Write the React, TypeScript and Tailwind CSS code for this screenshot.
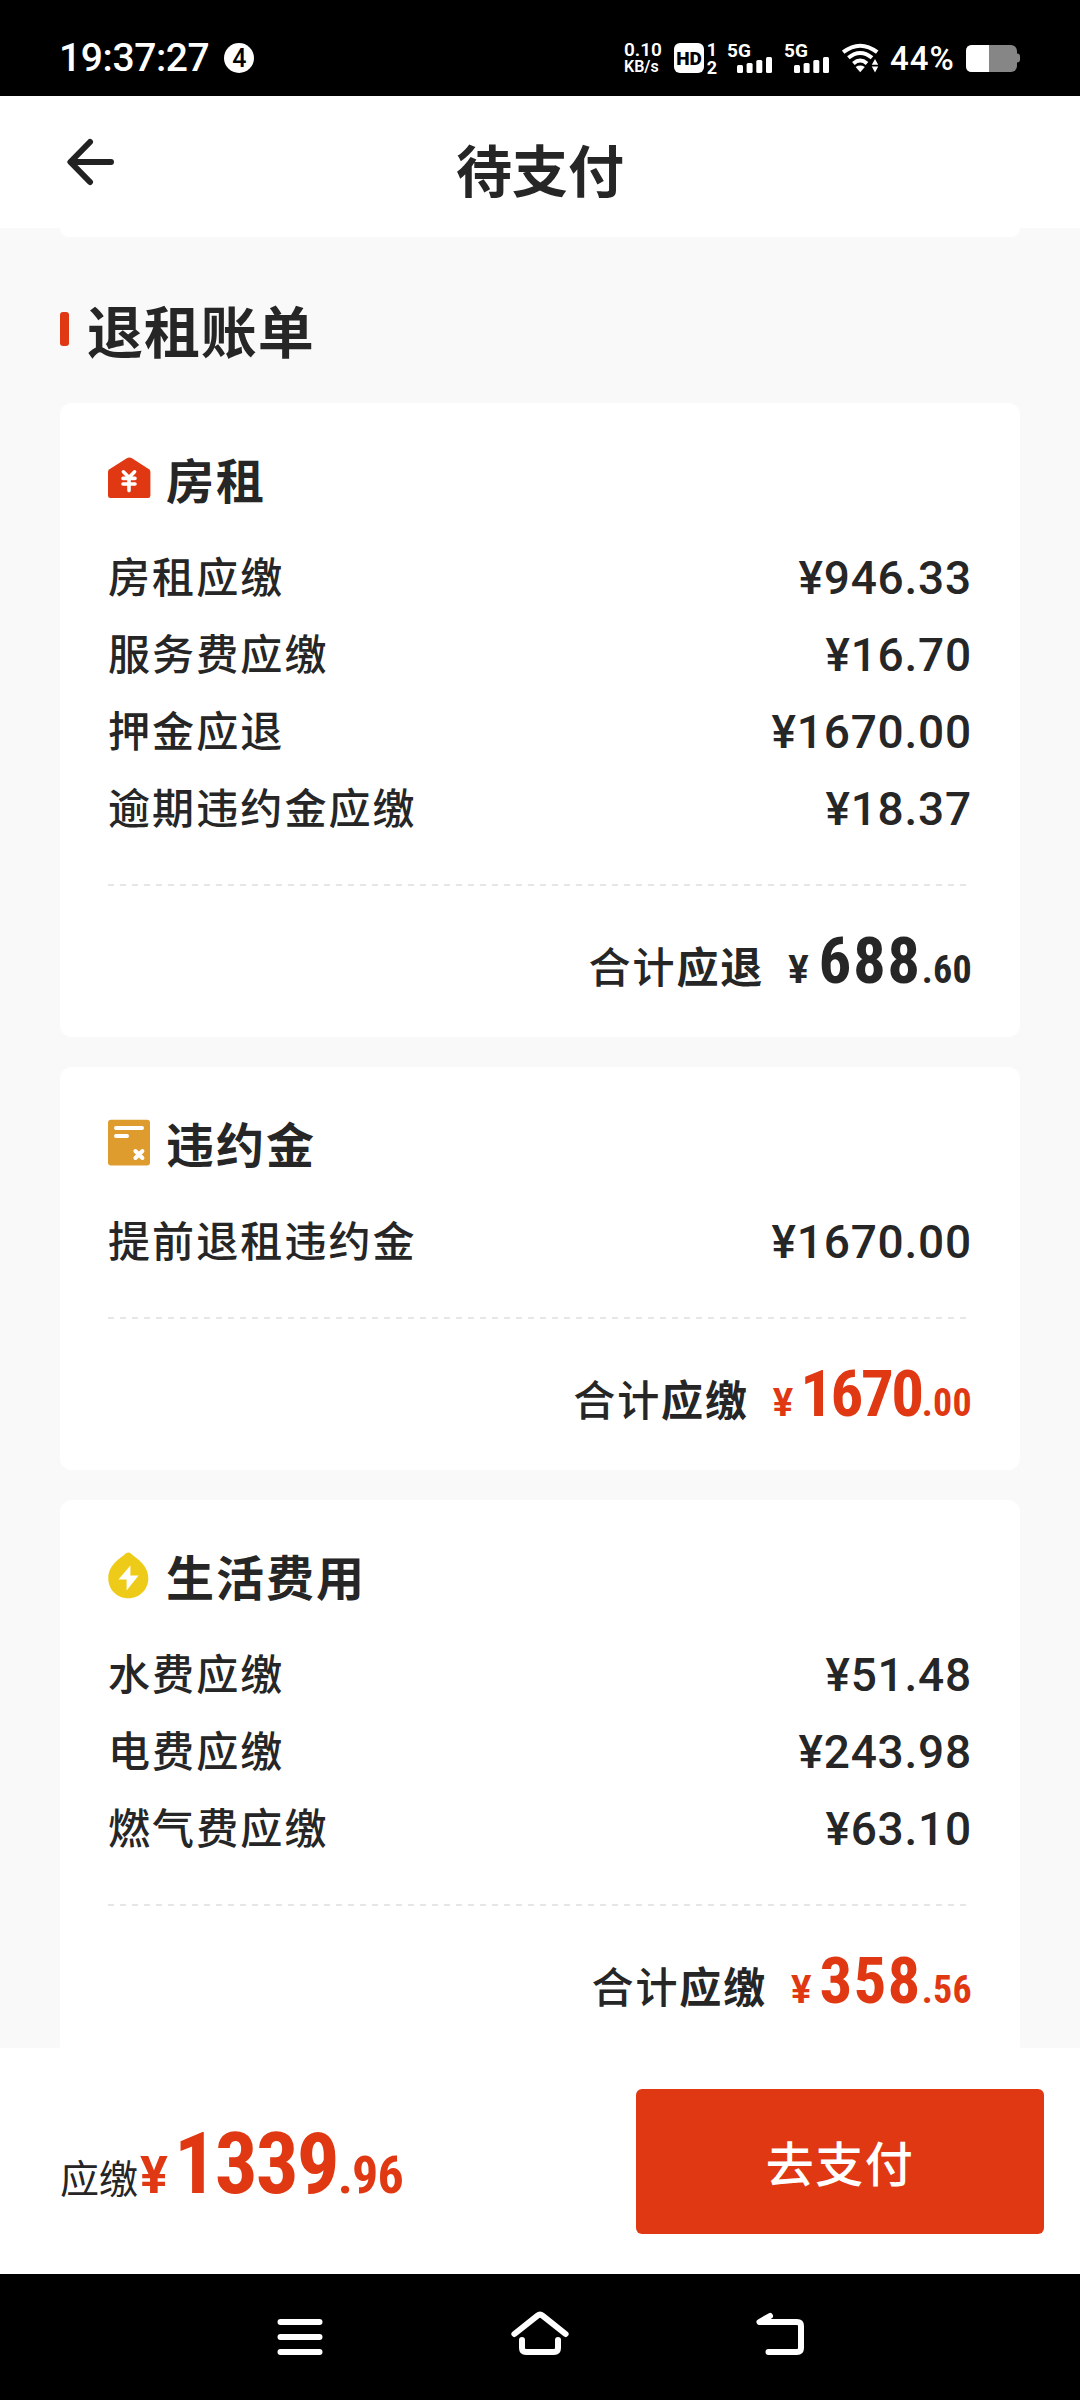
import type { ReactNode } from "react";
import clsx from "clsx";

interface BillItem {
    label: string;
    amount: string;
}

interface Bill {
    title: string;
    icon: ReactNode;
    items: BillItem[];
    totalAction: string;
    yuan: string;
    cents: string;
    isRefund?: boolean;
    yuanClass: string;
}

const HouseIcon = () => (
    <svg className="h-[48px] w-[44px]" viewBox="0 0 44 48">
        <path d="M18.8 4.2 Q21.4 2.6 24 4.2 L41 15.2 Q42.4 16.2 42.4 17.8 V41.5 Q42.4 44 40 44 H2.4 Q0 44 0 41.5 V17.8 Q0 16.2 1.4 15.2 Z" fill="#e03812" />
        <path d="M15.4 17.8 L21 23.4 L26.6 17.8 M15 24.4 H27 M15 30 H27 M21 23.4 V36.6" fill="none" stroke="#fff" strokeWidth="3.6" strokeLinecap="round" />
    </svg>
);

const PenaltyIcon = () => (
    <svg className="h-[48px] w-[44px]" viewBox="0 0 44 48">
        <rect x="0" y="1.8" width="42" height="45.6" rx="3" fill="#df9c2e" />
        <path d="M8 10 H34 M8 18 H19" stroke="#fff" strokeWidth="4" strokeLinecap="round" />
        <path d="M27.4 33 L34.4 40 M34.4 33 L27.4 40" stroke="#fff" strokeWidth="4" strokeLinecap="round" />
    </svg>
);

const UtilityIcon = () => (
    <svg className="h-[48px] w-[44px]" viewBox="0 0 44 48">
        <path d="M18 2.2 Q20.3 0.8 22.6 2.2 C26 6 40.3 12.5 40.3 27.2 C40.3 38.8 31.5 47.2 20.3 47.2 C9.1 47.2 0.3 38.8 0.3 27.2 C0.3 12.5 14.6 6 18 2.2 Z" fill="#eecb18" />
        <path d="M22.4 14.5 V24.6 H30.6 L18.6 39.4 V28.6 H10.4 Z" fill="#fff" />
    </svg>
);

const bills: Bill[] = [
    {
        title: "房租",
        icon: <HouseIcon />,
        items: [
            { label: "房租应缴", amount: "946.33" },
            { label: "服务费应缴", amount: "16.70" },
            { label: "押金应退", amount: "1670.00" },
            { label: "逾期违约金应缴", amount: "18.37" },
        ],
        totalAction: "应退",
        yuan: "688",
        cents: "60",
        isRefund: true,
        yuanClass: "ml-2.5 tracking-[1.5px]",
    },
    {
        title: "违约金",
        icon: <PenaltyIcon />,
        items: [{ label: "提前退租违约金", amount: "1670.00" }],
        totalAction: "应缴",
        yuan: "1670",
        cents: "00",
        yuanClass: "ml-[7px] -tracking-[2.5px]",
    },
    {
        title: "生活费用",
        icon: <UtilityIcon />,
        items: [
            { label: "水费应缴", amount: "51.48" },
            { label: "电费应缴", amount: "243.98" },
            { label: "燃气费应缴", amount: "63.10" },
        ],
        totalAction: "应缴",
        yuan: "358",
        cents: "56",
        yuanClass: "ml-2 tracking-[1.2px]",
    },
];

const SignalIcon = () => (
    <div className="relative h-[30px] w-[45px]">
        <span className="absolute -top-px -left-px font-['Roboto'] text-[19px] leading-[17px] font-bold">
            5G
        </span>
        <svg className="h-[30px] w-[45px]" viewBox="0 0 45 30" fill="#fff">
            <rect x="9" y="22" width="6" height="8" rx="1.5" />
            <rect x="18.6" y="20" width="6" height="10" rx="1.5" />
            <rect x="28.3" y="17" width="6" height="13" rx="1.5" />
            <rect x="38" y="14" width="6" height="16" rx="1.5" />
        </svg>
    </div>
);

const StatusBar = () => (
    <div className="flex h-24 items-center bg-black pt-5 pr-[60px] pl-[59px] font-['Roboto'] text-white">
        <span className="text-[39px] leading-none font-medium -tracking-[0.4px]">19:37:27</span>
        <span className="ml-[15px] flex size-[30px] items-center justify-center rounded-full bg-white text-[25px] leading-none font-medium text-black">
            4
        </span>
        <div className="ml-auto flex items-center">
            <p className="w-[38px] text-[19px] leading-[16px] font-semibold">
                0.10
                <br />
                <span className="text-[16px]">KB/s</span>
            </p>
            <div className="ml-3 flex size-[30px] items-center justify-center rounded-md bg-white text-[19px] leading-none font-black text-black font-stretch-90%">
                HD
            </div>
            <div className="ml-0.5 flex h-[33px] w-3 flex-col items-center justify-between text-[18px] leading-[15px] font-bold">
                <span>1</span>
                <span>2</span>
            </div>
            <div className="ml-2.5">
                <SignalIcon />
            </div>
            <div className="ml-3">
                <SignalIcon />
            </div>
            <svg className="ml-3 h-[30px] w-[37px]" viewBox="0 0 37 30">
                <g fill="none" stroke="#fff" strokeWidth="4">
                    <path d="M1.2 9.2 Q18.2 -3.8 35.2 9.2" />
                    <path d="M6.4 14.8 Q18.2 5.2 30 14.8" />
                    <path d="M11.4 20.4 Q18.2 14.6 25 20.4" />
                </g>
                <path d="M13.6 24 Q18.2 21.2 22.8 24 L18.2 29.2 Z" fill="#fff" />
                <path d="M29.8 21.8 L33 16 L36.2 21.8 Z M29.8 23.6 H36.2 L33 29.4 Z" fill="#fff" />
            </svg>
            <span className="ml-[11px] w-[66px] pt-px text-[33px] leading-none font-medium tracking-[1px]">44%</span>
            <svg className="ml-[10px] h-[30px] w-[54px]" viewBox="0 0 54 30">
                <rect x="46" y="10.5" width="8" height="9" rx="3" fill="#868686" />
                <rect x="0" y="2" width="51" height="27" rx="6" fill="#868686" />
                <path d="M6 2 H23 V29 H6 Q0 29 0 23 V8 Q0 2 6 2 Z" fill="#fff" />
            </svg>
        </div>
    </div>
);

const Header = () => (
    <header className="grid h-[132px] grid-cols-[1fr_auto_1fr] items-center bg-white">
        <svg className="ml-[66px] h-[48px] w-[50px]" viewBox="0 0 50 48" fill="none" stroke="#222" strokeWidth="6" strokeLinecap="round" strokeLinejoin="round">
            <path d="M24 4 L4.4 24 L24 44 M5 24 H45" />
        </svg>
        <h1 className="pt-[11px] text-[56px] leading-none font-bold">待支付</h1>
    </header>
);

const BillCard = ({ bill }: { bill: Bill }) => (
    <section className="rounded-xl bg-white px-12 pt-[43px] pb-[43px]">
        <div className="flex h-16 items-center">
            {bill.icon}
            <h3 className="ml-[14px] text-[48px] leading-none font-bold tracking-[2px]">{bill.title}</h3>
        </div>

        <ul className="mt-[26px]">
            {bill.items.map((item) => (
                <li key={item.label} className="flex h-[77px] items-center justify-between">
                    <span className="text-[42px] leading-none font-medium tracking-[2.1px]">
                        {item.label}
                    </span>
                    <span className="pt-1.5 font-['Roboto'] text-[46px] leading-none font-medium tracking-[0.8px]">
                        ¥{item.amount}
                    </span>
                </li>
            ))}
        </ul>

        <div className="mt-10 h-0.5 bg-[repeating-linear-gradient(90deg,#e6e6e6_0_6px,transparent_6px_12px)]" />

        <div className="mt-[42px] flex h-[66px] items-baseline justify-end">
            <span className="text-[42px] leading-none font-medium tracking-[1.9px]">
                合计<span className="font-bold">{bill.totalAction}</span>
            </span>
            <span
                className={clsx(
                    "ml-6 flex items-baseline font-['Roboto'] font-bold font-stretch-75%",
                    bill.isRefund ? "text-[#262626]" : "text-[#e03812]"
                )}
            >
                <span className="text-[38px] leading-none font-stretch-90%">¥</span>
                <span className={clsx("text-[65px] leading-[66px]", bill.yuanClass)}>{bill.yuan}</span>
                <span className="text-[38px] leading-none tracking-[0.3px]">.{bill.cents}</span>
            </span>
        </div>
    </section>
);

const PayBar = () => (
    <footer className="flex h-[226px] items-center justify-between bg-white pr-9 pl-[60px]">
        <div className="flex items-baseline pt-1.5">
            <span className="text-[39px] leading-none">应缴</span>
            <span className="ml-0.5 flex items-baseline font-['Roboto'] font-bold text-[#e03812] font-stretch-75%">
                <span className="text-[52px] leading-none font-stretch-90%">¥</span>
                <span className="ml-1.5 text-[85px] leading-[86px] -tracking-[2px]">1339</span>
                <span className="text-[52px] leading-none -tracking-[0.8px]">.96</span>
            </span>
        </div>
        <button className="h-[145px] w-[408px] rounded-md bg-[#e03812] text-[48px] leading-none font-medium tracking-[1.5px] text-white">
            去支付
        </button>
    </footer>
);

const NavBar = () => (
    <nav className="flex h-[126px] items-center justify-center gap-[182px] bg-black pb-1">
        <svg className="h-[50px] w-[58px]" viewBox="0 0 58 50" fill="none" stroke="#fff" strokeWidth="6" strokeLinecap="round">
            <path d="M9.5 12 H48.5 M9.5 27 H48.5 M9.5 42 H48.5" />
        </svg>
        <svg className="h-[50px] w-[58px]" viewBox="0 0 58 50" fill="none" stroke="#fff" strokeWidth="6" strokeLinecap="round" strokeLinejoin="round">
            <path d="M3.4 24 L26.5 5.6 Q29 3.6 31.5 5.6 L54.6 24" />
            <path d="M11 30 V38 Q11 42 15 42 H43 Q47 42 47 38 V30" />
        </svg>
        <svg className="h-[50px] w-[58px]" viewBox="0 0 58 50" fill="none" stroke="#fff" strokeWidth="6" strokeLinecap="round" strokeLinejoin="round">
            <path d="M19 6 L8.5 12 H46 Q50 12 50 16 V38 Q50 42 46 42 H17.5" />
        </svg>
    </nav>
);

export default function App() {
    return (
        <div className="flex h-[2400px] w-[1080px] flex-col overflow-hidden bg-white font-['Noto_Sans_CJK_SC',sans-serif] text-[#262626]">
            <StatusBar />
            <Header />
            <main className="min-h-0 flex-1 overflow-hidden bg-[#f9f9f9] px-[60px]">
                <div className="h-[9px] rounded-b-xl bg-white" />
                <div className="mt-[64px] mb-[46px] flex h-14 items-center">
                    <span className="h-[34px] w-[9px] rounded-[3px] bg-[#e03812]" />
                    <h2 className="ml-[18px] text-[56px] leading-none font-bold tracking-[0.9px]">退租账单</h2>
                </div>
                <div className="flex flex-col gap-[30px]">
                    {bills.map((bill) => (
                        <BillCard key={bill.title} bill={bill} />
                    ))}
                </div>
            </main>
            <PayBar />
            <NavBar />
        </div>
    );
}
